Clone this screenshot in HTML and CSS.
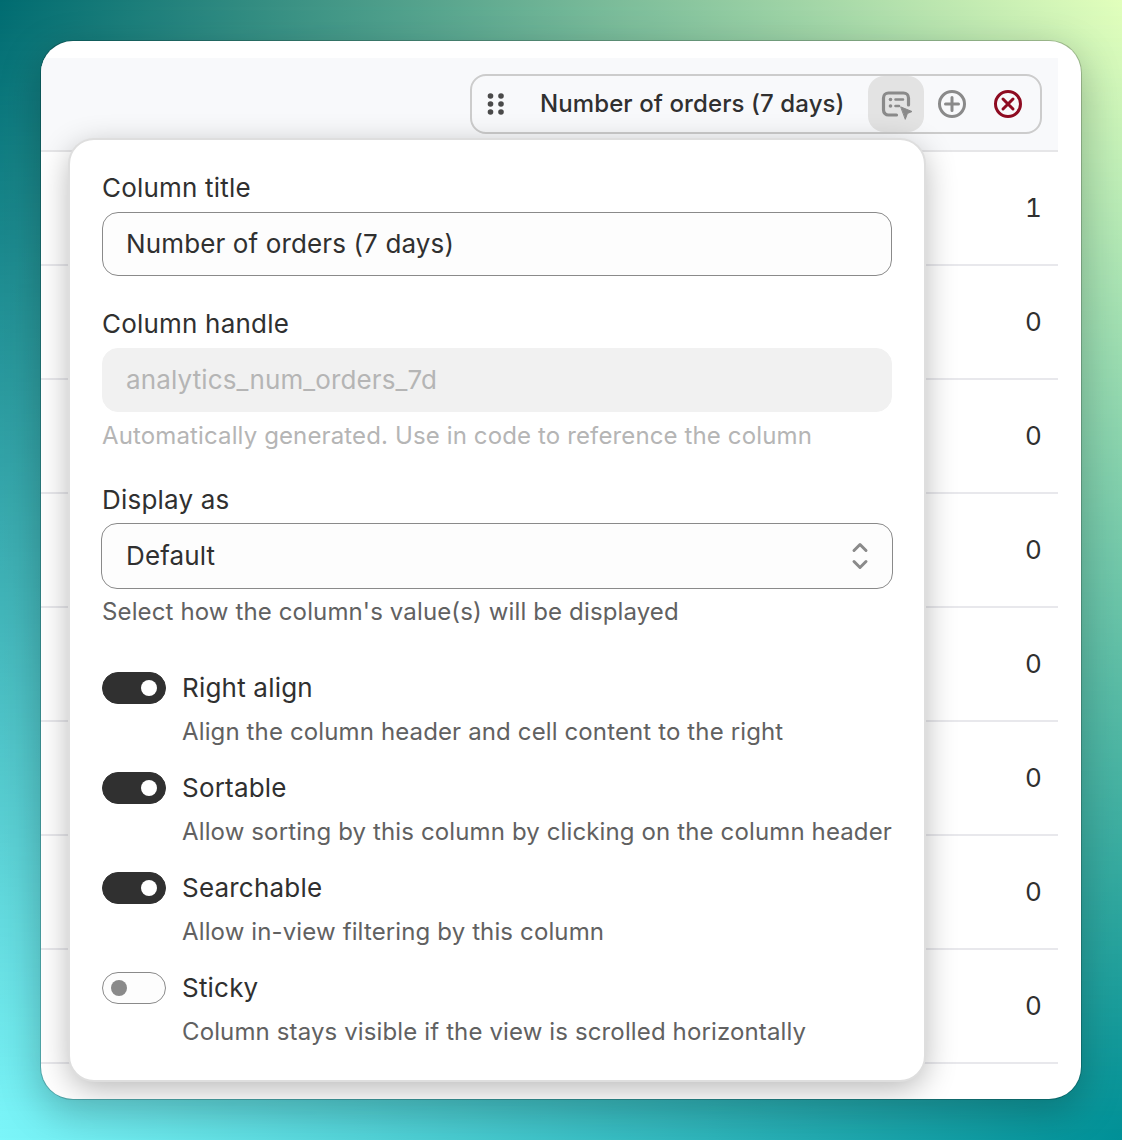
FILE: index.html
```html
<!DOCTYPE html>
<html>
<head>
    <meta charset="UTF-8">
    <title>Column settings</title>
    <link rel="stylesheet" href="styles.css">
</head>
<body>
    <div class="card">
        <div class="table">
            <div class="table-header">
                <div class="column-chip">
                    <svg class="grab-icon" viewBox="0 0 40 40" width="40" height="40">
                        <circle cx="14.5" cy="12" r="2.8"/><circle cx="25" cy="12" r="2.8"/>
                        <circle cx="14.5" cy="20" r="2.8"/><circle cx="25" cy="20" r="2.8"/>
                        <circle cx="14.5" cy="28" r="2.8"/><circle cx="25" cy="28" r="2.8"/>
                    </svg>
                    <span class="chip-title">Number of orders (7 days)</span>
                    <button class="chip-button active">
                        <svg viewBox="0 0 40 40" width="40" height="40" fill="none" stroke="#8a8a8a" stroke-width="3.2" stroke-linecap="round">
                            <path d="M20.5 31H12.5a5 5 0 0 1-5-5V14a5 5 0 0 1 5-5h15a5 5 0 0 1 5 5v7"/>
                            <path d="M19.5 15.5h7.5M19.5 22h3.5" stroke-width="2.6"/>
                            <circle cx="14.5" cy="15.5" r="1.8" fill="#8a8a8a" stroke="none"/>
                            <circle cx="14.5" cy="22" r="1.8" fill="#8a8a8a" stroke="none"/>
                            <path d="M25 23l11 4.5-4.6 2-2 5.5z" fill="#8a8a8a" stroke="#8a8a8a" stroke-width="1" stroke-linejoin="round"/>
                        </svg>
                    </button>
                    <button class="chip-button">
                        <svg viewBox="0 0 40 40" width="40" height="40" fill="none" stroke="#8a8a8a" stroke-width="3" stroke-linecap="round">
                            <circle cx="20" cy="20" r="12.5"/>
                            <path d="M20 13.5v13M13.5 20h13"/>
                        </svg>
                    </button>
                    <button class="chip-button">
                        <svg viewBox="0 0 40 40" width="40" height="40" fill="none" stroke="#8e0b21" stroke-width="3" stroke-linecap="round">
                            <circle cx="20" cy="20" r="12.5"/>
                            <path d="M15 15l10 10M25 15l-10 10"/>
                        </svg>
                    </button>
                </div>
            </div>
            <div class="table-row">1</div>
            <div class="table-row">0</div>
            <div class="table-row">0</div>
            <div class="table-row">0</div>
            <div class="table-row">0</div>
            <div class="table-row">0</div>
            <div class="table-row">0</div>
            <div class="table-row">0</div>
        </div>

        <div class="popover">
            <div class="field">
                <label class="field-label" for="columnTitle">Column title</label>
                <input class="text-input" id="columnTitle" type="text" value="Number of orders (7 days)">
            </div>
            <div class="field">
                <label class="field-label" for="columnHandle">Column handle</label>
                <input class="text-input" id="columnHandle" type="text" value="analytics_num_orders_7d" disabled>
                <div class="help-text disabled">Automatically generated. Use in code to reference the column</div>
            </div>
            <div class="field field-tight">
                <div class="field-label">Display as</div>
                <div class="select-box">
                    <span>Default</span>
                    <svg viewBox="0 0 20 32" width="20" height="32" fill="none" stroke="#8a8a8a" stroke-width="3" stroke-linecap="round" stroke-linejoin="round">
                        <path d="M4 10.5L10 4.5l6 6M4 21.5l6 6 6-6"/>
                    </svg>
                </div>
                <div class="help-text">Select how the column's value(s) will be displayed</div>
            </div>
            <div class="toggle-list">
                <div class="toggle-row">
                    <div class="toggle on"><span class="knob"></span></div>
                    <div class="toggle-label">Right align</div>
                    <div class="help-text">Align the column header and cell content to the right</div>
                </div>
                <div class="toggle-row">
                    <div class="toggle on"><span class="knob"></span></div>
                    <div class="toggle-label">Sortable</div>
                    <div class="help-text">Allow sorting by this column by clicking on the column header</div>
                </div>
                <div class="toggle-row">
                    <div class="toggle on"><span class="knob"></span></div>
                    <div class="toggle-label">Searchable</div>
                    <div class="help-text">Allow in-view filtering by this column</div>
                </div>
                <div class="toggle-row">
                    <div class="toggle"><span class="knob"></span></div>
                    <div class="toggle-label">Sticky</div>
                    <div class="help-text">Column stays visible if the view is scrolled horizontally</div>
                </div>
            </div>
        </div>
    </div>
</body>
</html>
```
FILE: styles.css
```css
* {
    box-sizing: border-box;
}

html, body {
    margin: 0;
    height: 1140px;
    overflow: hidden;
}

body {
    position: relative;
    padding: 41px;
    font-family: Inter, "Liberation Sans", sans-serif;
    font-weight: 425;
    letter-spacing: 0.13px;
    color: #303030;
    background: linear-gradient(to right, #7cf6fa 0%, #009097 100%);
}

/* top half of the backdrop, faded out towards the bottom */
body::before {
    content: "";
    position: absolute;
    inset: 0;
    background: linear-gradient(to right, #006b70 0%, #e2ffbc 100%);
    -webkit-mask-image: linear-gradient(to bottom, #000 0%, transparent 100%);
    mask-image: linear-gradient(to bottom, #000 0%, transparent 100%);
}

.card {
    position: relative;
    width: 1040px;
    height: 1058px;
    padding-top: 17px;
    background-color: white;
    border-radius: 32px;
    box-shadow: 0 0 0 1px rgba(0,0,0,0.2), 0 12px 40px rgba(0,0,0,0.25);
    overflow: hidden;
}

.table {
    width: 1017px;
}

.table-header {
    display: flex;
    justify-content: flex-end;
    height: 94px;
    padding: 16px 16px 0 0;
    background-color: #f8f9fb;
    border-bottom: 2px solid #e6e6e8;
}

.column-chip {
    display: flex;
    align-items: center;
    width: 572px;
    height: 60px;
    padding: 0 4px;
    border: 2px solid #cccccc;
    border-radius: 16px;
}

.grab-icon {
    fill: #4a4a4a;
    margin-right: 4px;
    flex: none;
}

.chip-title {
    flex: 1;
    padding: 0 0 2px 20px;
    font-size: 24px;
    font-weight: 550;
    letter-spacing: 0.1px;
    white-space: nowrap;
}

.chip-button {
    display: flex;
    align-items: center;
    justify-content: center;
    width: 56px;
    height: 56px;
    padding: 0;
    border: none;
    border-radius: 16px;
    background: none;
}

.chip-button.active {
    background-color: #e3e3e3;
}

.table-row {
    display: flex;
    align-items: center;
    justify-content: flex-end;
    height: 114px;
    padding: 0 16px 2px 0;
    font-size: 26px;
    font-variant-numeric: tabular-nums;
    border-bottom: 2px solid #e8e8ec;
}

.popover {
    position: absolute;
    left: 29px;
    top: 99px;
    width: 854px;
    height: 940px;
    padding: 28px 32px;
    background-color: white;
    border-radius: 24px;
    box-shadow: 0 0 0 2px #dedede, 0 8px 32px rgba(0,0,0,0.3);
}

.field {
    margin-bottom: 24px;
}

.field:first-child {
    margin-bottom: 28px;
}

.field-label {
    display: block;
    margin-bottom: 4px;
    font-size: 26px;
    line-height: 40px;
    letter-spacing: 0.2px;
}

.text-input {
    display: block;
    width: 100%;
    height: 64px;
    padding: 0 23px 2px;
    font-family: inherit;
    font-weight: inherit;
    letter-spacing: inherit;
    font-size: 26px;
    color: #303030;
    background-color: #fdfdfd;
    border: 1.5px solid #8a8a8a;
    border-radius: 16px;
    outline: none;
}

.text-input:disabled {
    color: #b5b5b5;
    -webkit-text-fill-color: #b5b5b5;
    background-color: #f1f1f1;
    border-color: #f1f1f1;
    opacity: 1;
}

.help-text {
    margin-top: 4px;
    font-size: 24px;
    line-height: 40px;
    color: #616161;
    white-space: nowrap;
}

.help-text.disabled {
    color: #b5b5b5;
}

.select-box {
    display: flex;
    align-items: center;
    justify-content: space-between;
    height: 66px;
    margin: -1px;
    padding: 0 22px 0 24px;
    font-size: 26px;
    background-color: #fdfdfd;
    border: 1.5px solid #8a8a8a;
    border-radius: 16px;
}

.select-box span {
    padding-bottom: 2px;
}

.toggle-list {
    display: flex;
    flex-direction: column;
    gap: 16px;
    margin-top: 36px;
}

.toggle-row {
    display: grid;
    grid-template-columns: 64px 1fr;
    column-gap: 16px;
    align-items: center;
}

.toggle-row .help-text {
    grid-column: 2;
}

.toggle {
    display: flex;
    align-items: center;
    width: 64px;
    height: 32px;
    padding: 0 8px;
    border: 1.5px solid #8a8a8a;
    border-radius: 16px;
    background-color: #fdfdfd;
}

.toggle.on {
    justify-content: flex-end;
    background-color: #303030;
    border-color: #303030;
}

.knob {
    width: 16px;
    height: 16px;
    border-radius: 50%;
    background-color: #8a8a8a;
}

.toggle.on .knob {
    background-color: white;
}

.toggle-label {
    font-size: 26px;
    line-height: 40px;
    letter-spacing: 0.2px;
}
```
